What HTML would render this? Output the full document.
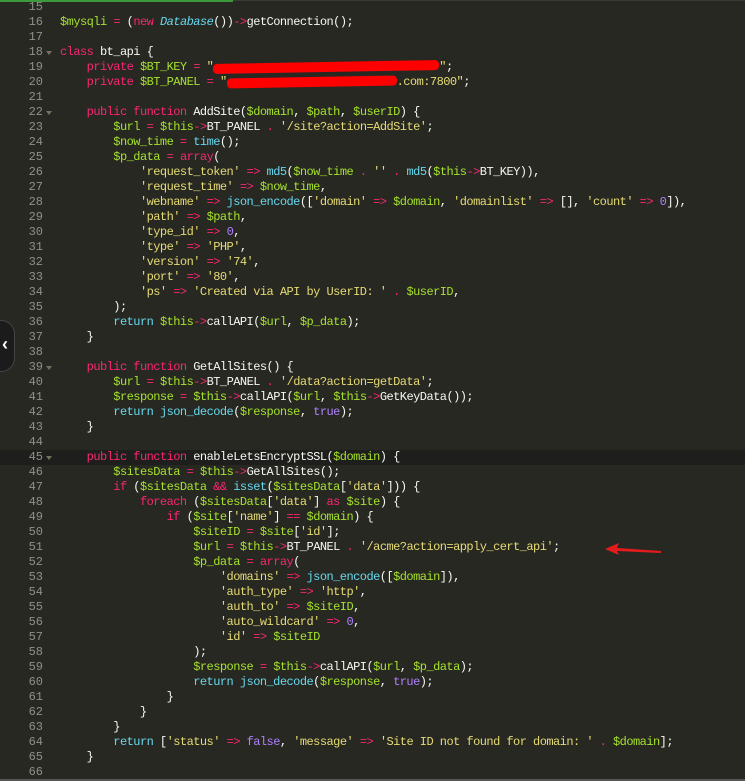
<!DOCTYPE html>
<html><head><meta charset="utf-8"><style>
html,body{margin:0;padding:0;width:745px;height:781px;overflow:hidden;background:#272822;}
#top{position:absolute;left:0;top:0;width:233px;height:2px;background:#3c9a3c;}
#top2{position:absolute;left:233px;top:0;width:512px;height:1px;background:#3a3a3a;}
#code{position:absolute;left:0;top:0px;width:745px;font-family:"Liberation Mono",monospace;font-size:12px;letter-spacing:-0.54px;}
.l{position:relative;height:15px;line-height:15px;white-space:pre;color:#f8f8f2;}
.l.hl{background:#1e1f1c;}
.n{position:absolute;left:0;width:43px;text-align:right;color:#8f908a;letter-spacing:0;font-size:12px;}
.fa{position:absolute;left:46px;top:6px;width:0;height:0;border-left:3px solid transparent;border-right:3px solid transparent;border-top:4px solid #75715e;}
.c{position:absolute;left:60px;}
.k{color:#f92672}.v{color:#a6e22e}.f{color:#66d9ef}.s{color:#e6db74}.p{color:#ae81ff}.i{color:#66d9ef;font-style:italic}
.red{display:inline-block;height:10px;background:#f00;border-radius:4px;vertical-align:middle;transform:rotate(-1deg);}
#back{position:absolute;left:-14px;top:320px;width:27px;height:50px;border-radius:14px;background:#1b1b1b;border:1px solid #444;}
#back span{position:absolute;left:15px;top:13px;color:#fff;font:bold 18px "Liberation Sans",sans-serif;}
#bot{position:absolute;left:0;top:779px;width:745px;height:2px;background:#555;}
</style></head><body>
<div id="top"></div><div id="top2"></div>
<div id="code">
<div class="l"><span class="n">15</span></div>
<div class="l"><span class="n">16</span><span class="c"><span class="v">$mysqli</span> <span class="k">=</span> (<span class="k">new</span> <span class="i">Database</span>())<span class="k">-&gt;</span>getConnection();</span></div>
<div class="l"><span class="n">17</span></div>
<div class="l"><span class="n">18</span><span class="fa"></span><span class="c"><span class="k">class</span> bt_api {</span></div>
<div class="l"><span class="n">19</span><span class="c">    <span class="k">private</span> <span class="v">$BT_KEY</span> <span class="k">=</span> <span class="s">"<span class="red" style="width:226px"></span>"</span>;</span></div>
<div class="l"><span class="n">20</span><span class="c">    <span class="k">private</span> <span class="v">$BT_PANEL</span> <span class="k">=</span> <span class="s">"<span class="red" style="width:170px"></span>.com:7800"</span>;</span></div>
<div class="l"><span class="n">21</span></div>
<div class="l"><span class="n">22</span><span class="fa"></span><span class="c">    <span class="k">public</span> <span class="k">function</span> AddSite(<span class="v">$domain</span>, <span class="v">$path</span>, <span class="v">$userID</span>) {</span></div>
<div class="l"><span class="n">23</span><span class="c">        <span class="v">$url</span> <span class="k">=</span> <span class="v">$this</span><span class="k">-&gt;</span>BT_PANEL <span class="k">.</span> <span class="s">'/site?action=AddSite'</span>;</span></div>
<div class="l"><span class="n">24</span><span class="c">        <span class="v">$now_time</span> <span class="k">=</span> <span class="f">time</span>();</span></div>
<div class="l"><span class="n">25</span><span class="c">        <span class="v">$p_data</span> <span class="k">=</span> <span class="k">array</span>(</span></div>
<div class="l"><span class="n">26</span><span class="c">            <span class="s">'request_token'</span> <span class="k">=&gt;</span> <span class="f">md5</span>(<span class="v">$now_time</span> <span class="k">.</span> <span class="s">''</span> <span class="k">.</span> <span class="f">md5</span>(<span class="v">$this</span><span class="k">-&gt;</span>BT_KEY)),</span></div>
<div class="l"><span class="n">27</span><span class="c">            <span class="s">'request_time'</span> <span class="k">=&gt;</span> <span class="v">$now_time</span>,</span></div>
<div class="l"><span class="n">28</span><span class="c">            <span class="s">'webname'</span> <span class="k">=&gt;</span> <span class="f">json_encode</span>([<span class="s">'domain'</span> <span class="k">=&gt;</span> <span class="v">$domain</span>, <span class="s">'domainlist'</span> <span class="k">=&gt;</span> [], <span class="s">'count'</span> <span class="k">=&gt;</span> <span class="p">0</span>]),</span></div>
<div class="l"><span class="n">29</span><span class="c">            <span class="s">'path'</span> <span class="k">=&gt;</span> <span class="v">$path</span>,</span></div>
<div class="l"><span class="n">30</span><span class="c">            <span class="s">'type_id'</span> <span class="k">=&gt;</span> <span class="p">0</span>,</span></div>
<div class="l"><span class="n">31</span><span class="c">            <span class="s">'type'</span> <span class="k">=&gt;</span> <span class="s">'PHP'</span>,</span></div>
<div class="l"><span class="n">32</span><span class="c">            <span class="s">'version'</span> <span class="k">=&gt;</span> <span class="s">'74'</span>,</span></div>
<div class="l"><span class="n">33</span><span class="c">            <span class="s">'port'</span> <span class="k">=&gt;</span> <span class="s">'80'</span>,</span></div>
<div class="l"><span class="n">34</span><span class="c">            <span class="s">'ps'</span> <span class="k">=&gt;</span> <span class="s">'Created via API by UserID: '</span> <span class="k">.</span> <span class="v">$userID</span>,</span></div>
<div class="l"><span class="n">35</span><span class="c">        );</span></div>
<div class="l"><span class="n">36</span><span class="c">        <span class="f">return</span> <span class="v">$this</span><span class="k">-&gt;</span>callAPI(<span class="v">$url</span>, <span class="v">$p_data</span>);</span></div>
<div class="l"><span class="n">37</span><span class="c">    }</span></div>
<div class="l"><span class="n">38</span></div>
<div class="l"><span class="n">39</span><span class="fa"></span><span class="c">    <span class="k">public</span> <span class="k">function</span> GetAllSites() {</span></div>
<div class="l"><span class="n">40</span><span class="c">        <span class="v">$url</span> <span class="k">=</span> <span class="v">$this</span><span class="k">-&gt;</span>BT_PANEL <span class="k">.</span> <span class="s">'/data?action=getData'</span>;</span></div>
<div class="l"><span class="n">41</span><span class="c">        <span class="v">$response</span> <span class="k">=</span> <span class="v">$this</span><span class="k">-&gt;</span>callAPI(<span class="v">$url</span>, <span class="v">$this</span><span class="k">-&gt;</span>GetKeyData());</span></div>
<div class="l"><span class="n">42</span><span class="c">        <span class="f">return</span> <span class="f">json_decode</span>(<span class="v">$response</span>, <span class="p">true</span>);</span></div>
<div class="l"><span class="n">43</span><span class="c">    }</span></div>
<div class="l"><span class="n">44</span></div>
<div class="l hl"><span class="n">45</span><span class="fa"></span><span class="c">    <span class="k">public</span> <span class="k">function</span> enableLetsEncryptSSL(<span class="v">$domain</span>) {</span></div>
<div class="l"><span class="n">46</span><span class="c">        <span class="v">$sitesData</span> <span class="k">=</span> <span class="v">$this</span><span class="k">-&gt;</span>GetAllSites();</span></div>
<div class="l"><span class="n">47</span><span class="c">        <span class="k">if</span> (<span class="v">$sitesData</span> <span class="k">&amp;&amp;</span> <span class="f">isset</span>(<span class="v">$sitesData</span>[<span class="s">'data'</span>])) {</span></div>
<div class="l"><span class="n">48</span><span class="c">            <span class="k">foreach</span> (<span class="v">$sitesData</span>[<span class="s">'data'</span>] <span class="k">as</span> <span class="v">$site</span>) {</span></div>
<div class="l"><span class="n">49</span><span class="c">                <span class="k">if</span> (<span class="v">$site</span>[<span class="s">'name'</span>] <span class="k">==</span> <span class="v">$domain</span>) {</span></div>
<div class="l"><span class="n">50</span><span class="c">                    <span class="v">$siteID</span> <span class="k">=</span> <span class="v">$site</span>[<span class="s">'id'</span>];</span></div>
<div class="l"><span class="n">51</span><span class="c">                    <span class="v">$url</span> <span class="k">=</span> <span class="v">$this</span><span class="k">-&gt;</span>BT_PANEL <span class="k">.</span> <span class="s">'/acme?action=apply_cert_api'</span>;</span></div>
<div class="l"><span class="n">52</span><span class="c">                    <span class="v">$p_data</span> <span class="k">=</span> <span class="k">array</span>(</span></div>
<div class="l"><span class="n">53</span><span class="c">                        <span class="s">'domains'</span> <span class="k">=&gt;</span> <span class="f">json_encode</span>([<span class="v">$domain</span>]),</span></div>
<div class="l"><span class="n">54</span><span class="c">                        <span class="s">'auth_type'</span> <span class="k">=&gt;</span> <span class="s">'http'</span>,</span></div>
<div class="l"><span class="n">55</span><span class="c">                        <span class="s">'auth_to'</span> <span class="k">=&gt;</span> <span class="v">$siteID</span>,</span></div>
<div class="l"><span class="n">56</span><span class="c">                        <span class="s">'auto_wildcard'</span> <span class="k">=&gt;</span> <span class="p">0</span>,</span></div>
<div class="l"><span class="n">57</span><span class="c">                        <span class="s">'id'</span> <span class="k">=&gt;</span> <span class="v">$siteID</span></span></div>
<div class="l"><span class="n">58</span><span class="c">                    );</span></div>
<div class="l"><span class="n">59</span><span class="c">                    <span class="v">$response</span> <span class="k">=</span> <span class="v">$this</span><span class="k">-&gt;</span>callAPI(<span class="v">$url</span>, <span class="v">$p_data</span>);</span></div>
<div class="l"><span class="n">60</span><span class="c">                    <span class="f">return</span> <span class="f">json_decode</span>(<span class="v">$response</span>, <span class="p">true</span>);</span></div>
<div class="l"><span class="n">61</span><span class="c">                }</span></div>
<div class="l"><span class="n">62</span><span class="c">            }</span></div>
<div class="l"><span class="n">63</span><span class="c">        }</span></div>
<div class="l"><span class="n">64</span><span class="c">        <span class="f">return</span> [<span class="s">'status'</span> <span class="k">=&gt;</span> <span class="p">false</span>, <span class="s">'message'</span> <span class="k">=&gt;</span> <span class="s">'Site ID not found for domain: '</span> <span class="k">.</span> <span class="v">$domain</span>];</span></div>
<div class="l"><span class="n">65</span><span class="c">    }</span></div>
<div class="l"><span class="n">66</span></div>
</div>
<svg style="position:absolute;left:603px;top:541px" width="62" height="16"><path d="M2 8 L16 2 L14 7 L58 10 L58 12 L14 10 L16 14 Z" fill="#e51c1c"/></svg>
<div id="back"><span>‹</span></div>
<div id="bot"></div>
</body></html>
